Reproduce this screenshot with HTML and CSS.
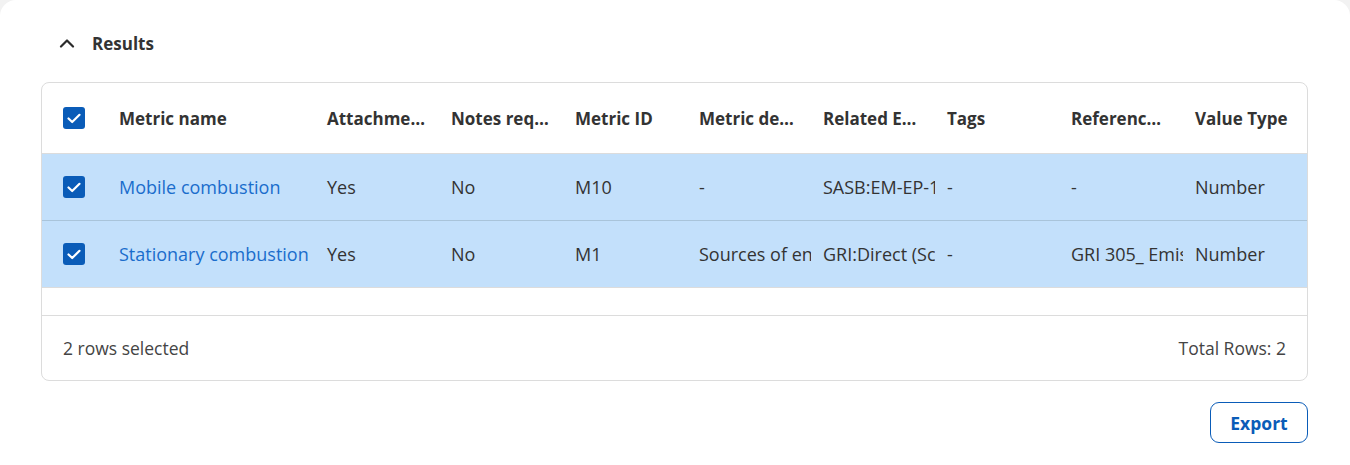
FILE: index.html
```html
<!DOCTYPE html>
<html lang="en">
<head>
    <meta charset="UTF-8">
    <meta name="viewport" content="width=device-width, initial-scale=1.0">
    <title>Results</title>
    <link rel="stylesheet" href="styles.css">
</head>
<body>
    <div class="panel">
        <div class="section-head">
            <svg class="chevron" width="16" height="10" viewBox="0 0 16 10">
                <path d="M2 8.5 L8 2.5 L14 8.5" fill="none" stroke="#2b2b2b" stroke-width="2.2" stroke-linecap="round" stroke-linejoin="round"/>
            </svg>
            <span>Results</span>
        </div>

        <div class="grid">
            <table>
                <colgroup>
                    <col class="col-check">
                    <col class="col-name">
                    <col><col><col><col><col><col><col><col>
                </colgroup>
                <thead>
                    <tr>
                        <th class="check-cell"><span class="checkbox"><svg width="14" height="11" viewBox="0 0 14 11"><path d="M1.5 5.5 L5.2 9 L12.5 1.8" fill="none" stroke="#fff" stroke-width="2.2" stroke-linecap="round" stroke-linejoin="round"/></svg></span></th>
                        <th>Metric name</th>
                        <th>Attachments required</th>
                        <th>Notes required</th>
                        <th>Metric ID</th>
                        <th>Metric description</th>
                        <th>Related ESG frameworks</th>
                        <th>Tags</th>
                        <th>Reference documents</th>
                        <th>Value Type</th>
                    </tr>
                </thead>
                <tbody>
                    <tr class="selected">
                        <td class="check-cell"><span class="checkbox"><svg width="14" height="11" viewBox="0 0 14 11"><path d="M1.5 5.5 L5.2 9 L12.5 1.8" fill="none" stroke="#fff" stroke-width="2.2" stroke-linecap="round" stroke-linejoin="round"/></svg></span></td>
                        <td><a href="#">Mobile combustion</a></td>
                        <td>Yes</td>
                        <td>No</td>
                        <td>M10</td>
                        <td>-</td>
                        <td>SASB:EM-EP-110a.1</td>
                        <td>-</td>
                        <td>-</td>
                        <td>Number</td>
                    </tr>
                    <tr class="selected">
                        <td class="check-cell"><span class="checkbox"><svg width="14" height="11" viewBox="0 0 14 11"><path d="M1.5 5.5 L5.2 9 L12.5 1.8" fill="none" stroke="#fff" stroke-width="2.2" stroke-linecap="round" stroke-linejoin="round"/></svg></span></td>
                        <td><a href="#">Stationary combustion</a></td>
                        <td>Yes</td>
                        <td>No</td>
                        <td>M1</td>
                        <td>Sources of energy used</td>
                        <td>GRI:Direct (Scope 1)</td>
                        <td>-</td>
                        <td>GRI 305_ Emissions</td>
                        <td>Number</td>
                    </tr>
                </tbody>
            </table>
            <div class="grid-spacer"></div>
            <div class="grid-footer">
                <span>2 rows selected</span>
                <span>Total Rows: 2</span>
            </div>
        </div>

        <div class="actions">
            <button type="button" class="btn-outline">Export</button>
        </div>
    </div>
</body>
</html>
```

FILE: styles.css
```css
body {
    margin: 0;
    background-color: #f2f2f2;
    font-family: "Open Sans", "Noto Sans", Arial, sans-serif;
    color: #333;
}

.panel {
    box-sizing: border-box;
    min-height: 100vh;
    background-color: #fff;
    border-radius: 16px 16px 0 0;
    padding: 30px 42px 20px 41px;
}

.section-head {
    display: flex;
    align-items: center;
    height: 26px;
    padding-left: 18px;
    font-size: 17px;
    font-weight: 700;
    color: #333;
}

.section-head .chevron {
    margin-right: 17px;
}

.grid {
    margin-top: 26px;
    border: 1px solid #dcdcdc;
    border-radius: 8px;
    overflow: hidden;
}

table {
    width: 100%;
    table-layout: fixed;
    border-collapse: collapse;
}

.col-check {
    width: 65px;
}

.col-name {
    width: 208px;
}

th, td {
    padding: 0 12px;
    text-align: left;
    white-space: nowrap;
    overflow: hidden;
}

th {
    height: 70px;
    font-size: 17px;
    font-weight: 700;
    color: #333;
    text-overflow: ellipsis;
    border-bottom: 1px solid #dcdcdc;
}

td {
    height: 66px;
    font-size: 18px;
    color: #333;
    text-overflow: clip;
    border-bottom: 1px solid #a9c4da;
}

tbody tr:last-child td {
    border-bottom-color: #dcdcdc;
}

tr.selected td {
    background-color: #c3e0fb;
}

td a {
    color: #1a6dcc;
    text-decoration: none;
}

.check-cell {
    padding-left: 21px;
}

.checkbox {
    display: flex;
    align-items: center;
    justify-content: center;
    width: 22px;
    height: 22px;
    border-radius: 3px;
    background-color: #0a5cb8;
}

.grid-spacer {
    height: 27px;
    border-bottom: 1px solid #dcdcdc;
}

.grid-footer {
    display: flex;
    justify-content: space-between;
    align-items: center;
    height: 64px;
    padding: 0 21px;
    font-size: 17.5px;
    color: #444;
}

.actions {
    display: flex;
    justify-content: flex-end;
    margin-top: 21px;
}

.btn-outline {
    width: 98px;
    height: 41px;
    border: 1.5px solid #0a5cb8;
    border-radius: 9px;
    background-color: #fff;
    color: #0a5cb8;
    font-family: inherit;
    font-size: 17.5px;
    font-weight: 700;
    cursor: pointer;
}
```
